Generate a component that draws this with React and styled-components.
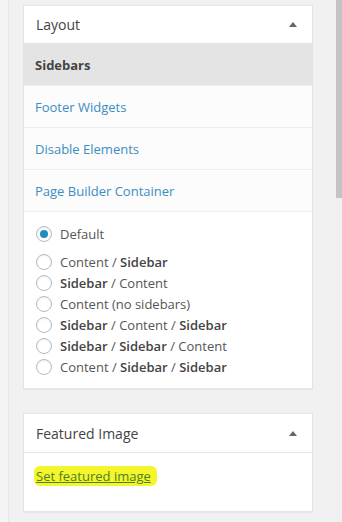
import styled, { createGlobalStyle } from 'styled-components';

const GlobalStyle = createGlobalStyle`
  html, body {
    margin: 0;
    padding: 0;
    background: #f1f1f1;
  }
  body {
    font-family: "Open Sans", "Noto Sans", sans-serif;
    color: #444;
  }
`;

const Screen = styled.div`
  display: flex;
  height: 522px;
  overflow: hidden;
`;

const Gutter = styled.div`
  width: 8px;
  flex-shrink: 0;
  background: #f4f4f4;
  border-right: 1px solid #e6e6e6;
`;

const Content = styled.div`
  flex: 1;
  display: flex;
  flex-direction: column;
  gap: 24px;
  padding: 5px 23px 0 14px;
`;

const ScrollTrack = styled.div`
  width: 6px;
  flex-shrink: 0;
  background: #f0f0f0;
`;

const ScrollThumb = styled.div`
  height: 198px;
  background: #c3c3c3;
`;

const Box = styled.div`
  background: #fff;
  border: 1px solid #e2e4e7;
  box-shadow: 0 1px 1px rgba(0, 0, 0, 0.04);
`;

const BoxHeader = styled.div`
  display: flex;
  align-items: center;
  justify-content: space-between;
  height: ${(p) => p.$height || 37}px;
  padding: 0 15px 0 12px;
  border-bottom: 1px solid #e2e4e7;
  font-size: 14px;
  color: #444;
`;

const Toggle = styled.span`
  width: 0;
  height: 0;
  border-left: 4px solid transparent;
  border-right: 4px solid transparent;
  border-bottom: 5px solid #666;
`;

const Tab = styled.div`
  display: flex;
  align-items: center;
  height: 41px;
  padding: 0 11px;
  font-size: 13px;
  border-bottom: 1px solid #eee;
  background: ${(p) => (p.$active ? '#e4e4e4' : '#fcfcfc')};
  color: ${(p) => (p.$active ? '#444' : '#3b8dc2')};
  font-weight: ${(p) => (p.$active ? 700 : 400)};
`;

const RadioList = styled.div`
  display: flex;
  flex-direction: column;
  padding: 11px 12px 11px;
`;

const RadioRow = styled.label`
  display: flex;
  align-items: center;
  gap: 8px;
  height: 21px;
  font-size: 13px;
  color: #555;
  margin-bottom: ${(p) => (p.$spaced ? 7 : 0)}px;

  b {
    color: #444;
    font-weight: 600;
  }
`;

const Radio = styled.span`
  position: relative;
  width: 16px;
  height: 16px;
  box-sizing: border-box;
  border-radius: 50%;
  border: 1px solid #b4b9be;
  background: #fff;
  box-shadow: inset 0 1px 2px rgba(0, 0, 0, 0.07);
  flex-shrink: 0;

  &::after {
    content: '';
    display: ${(p) => (p.$checked ? 'block' : 'none')};
    position: absolute;
    left: 3px;
    top: 3px;
    width: 8px;
    height: 8px;
    border-radius: 50%;
    background: #1e8cbe;
  }
`;

const BoxBody = styled.div`
  padding: 13px 12px 25px;
  font-size: 13px;
  line-height: 20px;
`;

const Highlight = styled.a`
  color: #4d7f2a;
  text-decoration: underline;
  background: #f4f52a;
  border-radius: 6px;
  padding: 1px 6px 1px 2px;
  margin-left: -2px;
`;

const options = [
  ['Default'],
  ['Content / ', <b key="a">Sidebar</b>],
  [<b key="a">Sidebar</b>, ' / Content'],
  ['Content (no sidebars)'],
  [<b key="a">Sidebar</b>, ' / Content / ', <b key="b">Sidebar</b>],
  [<b key="a">Sidebar</b>, ' / ', <b key="b">Sidebar</b>, ' / Content'],
  ['Content / ', <b key="a">Sidebar</b>, ' / ', <b key="b">Sidebar</b>],
];

const tabs = ['Sidebars', 'Footer Widgets', 'Disable Elements', 'Page Builder Container'];

export default function App() {
  return (
    <Screen>
      <GlobalStyle />
      <Gutter />
      <Content>
        <Box>
          <BoxHeader>
            <span>Layout</span>
            <Toggle />
          </BoxHeader>
          {tabs.map((t, i) => (
            <Tab key={t} $active={i === 0}>
              {t}
            </Tab>
          ))}
          <RadioList>
            {options.map((o, i) => (
              <RadioRow key={i} $spaced={i === 0}>
                <Radio $checked={i === 0} />
                <span>{o}</span>
              </RadioRow>
            ))}
          </RadioList>
        </Box>
        <Box>
          <BoxHeader $height={38}>
            <span>Featured Image</span>
            <Toggle />
          </BoxHeader>
          <BoxBody>
            <Highlight>Set featured image</Highlight>
          </BoxBody>
        </Box>
      </Content>
      <ScrollTrack>
        <ScrollThumb />
      </ScrollTrack>
    </Screen>
  );
}
